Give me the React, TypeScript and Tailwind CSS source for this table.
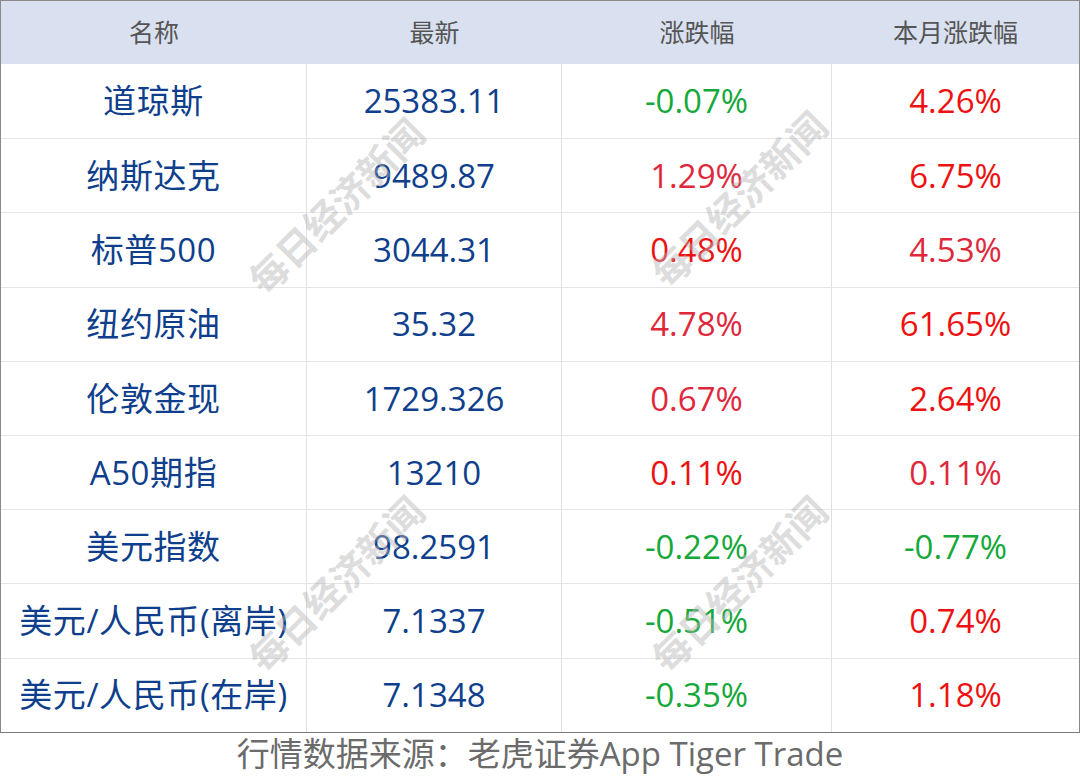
import React from "react";

const BLUE = "text-[#0f3f8c]";
const G = "text-[#16a83a]";
const R = "text-[#ee1111]";
const R2 = "text-[#e0283c]";

type Cell = { t: string; c: string };
const rows: [string, string, Cell, Cell][] = [
  ["道琼斯", "25383.11", { t: "-0.07%", c: G }, { t: "4.26%", c: R }],
  ["纳斯达克", "9489.87", { t: "1.29%", c: R2 }, { t: "6.75%", c: R }],
  ["标普500", "3044.31", { t: "0.48%", c: R }, { t: "4.53%", c: R2 }],
  ["纽约原油", "35.32", { t: "4.78%", c: R2 }, { t: "61.65%", c: R }],
  ["伦敦金现", "1729.326", { t: "0.67%", c: R2 }, { t: "2.64%", c: R }],
  ["A50期指", "13210", { t: "0.11%", c: R }, { t: "0.11%", c: R2 }],
  ["美元指数", "98.2591", { t: "-0.22%", c: G }, { t: "-0.77%", c: G }],
  ["美元/人民币(离岸)", "7.1337", { t: "-0.51%", c: G }, { t: "0.74%", c: R }],
  ["美元/人民币(在岸)", "7.1348", { t: "-0.35%", c: G }, { t: "1.18%", c: R }],
];

const font = { fontFamily: '"Open Sans", "Noto Sans CJK SC", sans-serif' };

function Watermark({ x, y }: { x: number; y: number }) {
  return (
    <div
      className="absolute pointer-events-none text-[38px] font-bold text-[#b4b4b4] opacity-45 whitespace-nowrap"
      style={{ left: x, top: y, transform: "translate(-50%, -50%) rotate(-45deg)", fontFamily: '"Noto Sans CJK SC", sans-serif' }}
    >
      每日经济新闻
    </div>
  );
}

export default function App() {
  return (
    <div className="relative w-[1080px] h-[777px] bg-white overflow-hidden" style={font}>
      <div className="border border-[#8a8a8a] border-b-[#7a7a7a]">
        <div className="grid grid-cols-[306px_255px_270px_1fr] h-[63px] bg-[#d9e0f0] text-[25px] text-[#555] items-center">
          <div className="text-center">名称</div>
          <div className="text-center">最新</div>
          <div className="text-center">涨跌幅</div>
          <div className="text-center">本月涨跌幅</div>
        </div>
        {rows.map((r, i) => (
          <div
            key={i}
            className={`grid grid-cols-[306px_255px_270px_1fr] h-[74.2px] text-[33px] items-stretch ${i > 0 ? "border-t border-[#e6e6e6]" : ""}`}
          >
            <div className={`flex items-center justify-center border-r border-[#e0e0e0] ${BLUE} tracking-[0.6px] whitespace-nowrap`}>{r[0]}</div>
            <div className={`flex items-center justify-center border-r border-[#e0e0e0] ${BLUE}`}>{r[1]}</div>
            <div className={`flex items-center justify-center border-r border-[#e0e0e0] ${r[2].c}`}>{r[2].t}</div>
            <div className={`flex items-center justify-center ${r[3].c}`}>{r[3].t}</div>
          </div>
        ))}
      </div>
      <div className="flex justify-center pt-[3px] text-[33px] leading-[36px] text-[#6b6b6b] whitespace-nowrap">
        行情数据来源：老虎证券App Tiger Trade
      </div>
      <Watermark x={335} y={205} />
      <Watermark x={738} y={198} />
      <Watermark x={335} y={583} />
      <Watermark x={738} y={583} />
    </div>
  );
}
